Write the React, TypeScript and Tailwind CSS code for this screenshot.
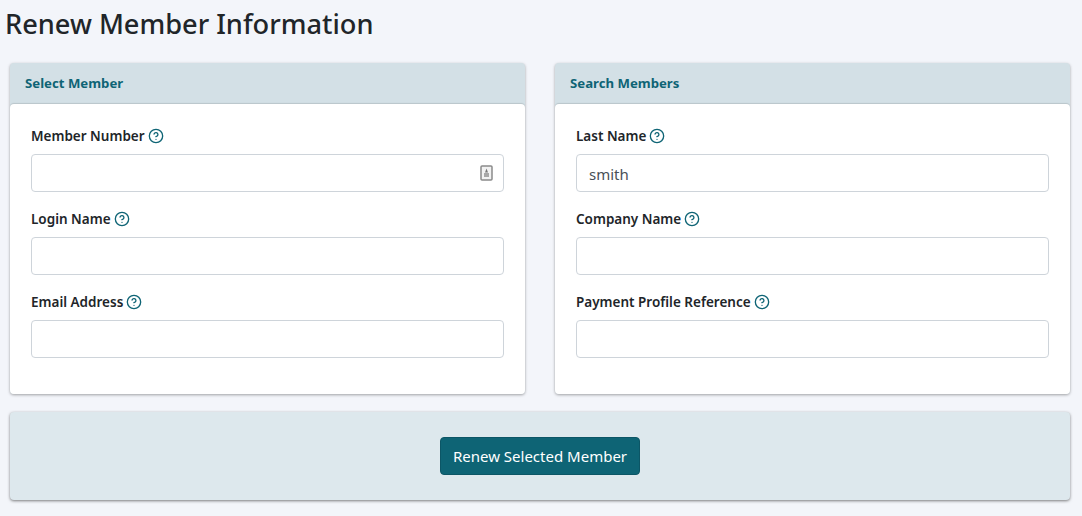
import { CircleHelp } from 'lucide-react';

type FieldProps = { label: string; value?: string; badge?: boolean };

function Field({ label, value, badge }: FieldProps) {
  return (
    <div className="mb-[15px]">
      <label className="flex items-center h-[24px] mb-[6px] text-[13.5px] font-semibold text-[#212529]">
        {label}
        <CircleHelp className="ml-[3px] w-[16px] h-[16px] text-[#0e6475]" strokeWidth={2} />
      </label>
      <div className="relative">
        <input
          readOnly
          value={value ?? ''}
          className="block w-full h-[38px] px-[12px] pt-[2px] text-[15px] text-[#495057] bg-white border border-[#ced4da] rounded-[4px] outline-none"
        />
        {badge && (
          <svg className="absolute right-[11px] top-[11px] w-[13px] h-[16px]" viewBox="0 0 13 16">
            <rect x="1" y="1" width="11" height="14" rx="1" fill="#f2f2f2" stroke="#8a8a8a" strokeWidth="1.5" />
            <path d="M6.5 3.5 L5 7.5 H8 Z" fill="#777" />
            <rect x="4" y="8" width="5" height="4" fill="#a8a8a8" />
          </svg>
        )}
      </div>
    </div>
  );
}

function Panel({ title, children }: { title: string; children: React.ReactNode }) {
  return (
    <div className="rounded-[4px] shadow-[0_1px_3px_rgba(0,0,0,0.35)] bg-[#d3e0e6]">
      <div className="h-[41px] pt-[1px] flex items-center px-[15px] text-[13.2px] font-bold text-[#0e6475]">{title}</div>
      <div className="bg-white rounded-[4px] h-[290px] px-[21px] pt-[20px] shadow-[0_-1px_1px_rgba(0,0,0,0.12)]">{children}</div>
    </div>
  );
}

export default function App() {
  return (
    <div className="min-h-[516px] bg-[#f3f5fa] font-['Noto_Sans',sans-serif] pl-[10px] pr-[12px]">
      <h1 className="-ml-[5px] h-[63px] pt-[4px] text-[27.2px] leading-[40px] font-medium text-[#212529]">
        Renew Member Information
      </h1>
      <div className="grid grid-cols-2 gap-[30px]">
        <Panel title="Select Member">
          <Field label="Member Number" badge />
          <Field label="Login Name" />
          <Field label="Email Address" />
        </Panel>
        <Panel title="Search Members">
          <Field label="Last Name" value="smith" />
          <Field label="Company Name" />
          <Field label="Payment Profile Reference" />
        </Panel>
      </div>
      <div className="mt-[18px] h-[88px] flex items-center justify-center bg-[#dde8ed] rounded-[4px] shadow-[0_1px_3px_rgba(0,0,0,0.5)]">
        <button className="h-[38px] w-[200px] bg-[#0e6475] border border-[#0c5666] rounded-[4px] text-white text-[15px]">
          Renew Selected Member
        </button>
      </div>
    </div>
  );
}
